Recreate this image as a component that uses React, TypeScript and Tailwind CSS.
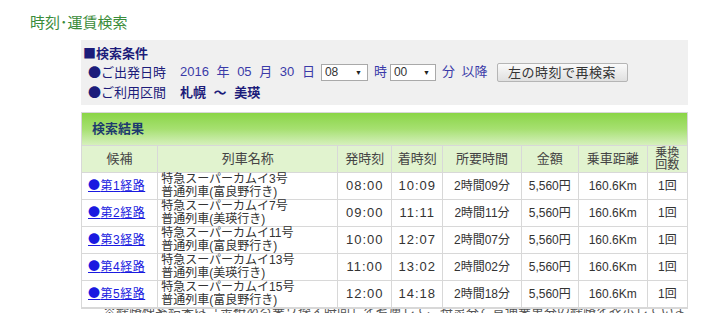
const ROUTES = [
  { no: 1, name: '特急スーパーカムイ3号', sub: '普通列車(富良野行き)', dep: '08:00', arr: '10:09', time: '2時間09分' },
  { no: 2, name: '特急スーパーカムイ7号', sub: '普通列車(美瑛行き)', dep: '09:00', arr: '11:11', time: '2時間11分' },
  { no: 3, name: '特急スーパーカムイ11号', sub: '普通列車(富良野行き)', dep: '10:00', arr: '12:07', time: '2時間07分' },
  { no: 4, name: '特急スーパーカムイ13号', sub: '普通列車(美瑛行き)', dep: '11:00', arr: '13:02', time: '2時間02分' },
  { no: 5, name: '特急スーパーカムイ15号', sub: '普通列車(富良野行き)', dep: '12:00', arr: '14:18', time: '2時間18分' },
]

const CJK = "font-['Noto_Sans_CJK_JP',sans-serif]"

function Select({ value, width }: { value: string; width: string }) {
  return (
    <span
      className={`inline-flex items-center justify-between h-[17px] border border-[#a9a9a9] bg-white pl-[3px] pr-[5px] text-[12px] leading-none text-[#333] ${width}`}
    >
      {value}
      <span className="text-[7px] text-[#222]">▼</span>
    </span>
  )
}

export default function App() {
  return (
    <div className="w-[726px] h-[336px] overflow-hidden bg-white font-['Liberation_Sans','Noto_Sans_CJK_JP',sans-serif]">
      <h1 className="pl-[30px] pt-[14px] text-[15px] leading-[18px] text-[#3a8c3a]">時刻･運賃検索</h1>

      <div className="ml-[81px] w-[607px]">
        {/* search conditions */}
        <div className="mt-[8px] h-[65px] bg-[#f0f0f0] pl-[2px] pt-[4px] text-[13px] text-[#1c1c7a]">
          <div className="h-[17px] leading-[17px] font-bold">
            <span className={CJK}>■</span>検索条件
          </div>
          <div className="flex items-center h-[22px] pl-[5px]">
            <span className="w-[92px]">
              <span className={CJK}>●</span>ご出発日時
            </span>
            <span className="text-[#3a3aa8] [word-spacing:4px]">2016 年 05 月 30 日</span>
            <span className="ml-[6px]">
              <Select value="08" width="w-[47px]" />
            </span>
            <span className="ml-[6px] text-[#3a3aa8]">時</span>
            <span className="ml-[3px]">
              <Select value="00" width="w-[46px]" />
            </span>
            <span className="ml-[6px] text-[#3a3aa8] [word-spacing:3px]">分 以降</span>
            <button className="ml-[9px] h-[19px] w-[131px] border border-[#b5b5b5] rounded-[2px] bg-gradient-to-b from-[#fafafa] to-[#e0e0e0] text-[13px] leading-none text-[#333] tracking-[0.5px]">
              左の時刻で再検索
            </button>
          </div>
          <div className="flex items-center h-[19px] pl-[5px]">
            <span className="w-[92px]">
              <span className={CJK}>●</span>ご利用区間
            </span>
            <span className="font-bold [word-spacing:4px]">札幌 ～ 美瑛</span>
          </div>
        </div>

        {/* results */}
        <div className="mt-[7px] border border-[#d8d8d8]">
          <div className="h-[32px] bg-gradient-to-b from-[#8ad545] via-[#a6e070] to-[#d6f0bc] pl-[10px] text-[13px] leading-[32px] font-bold text-[#1d3a6e]">
            検索結果
          </div>
          <table className="w-full border-collapse text-[13px] text-[#333]">
            <colgroup>
              <col className="w-[76px]" />
              <col className="w-[181px]" />
              <col className="w-[54px]" />
              <col className="w-[51px]" />
              <col className="w-[79px]" />
              <col className="w-[57px]" />
              <col className="w-[69px]" />
              <col className="w-[40px]" />
            </colgroup>
            <thead>
              <tr className="h-[27px] bg-[#e1f3cf] text-[#444]">
                <th className="border border-[#d8d8d8] border-l-0 font-normal">候補</th>
                <th className="border border-[#d8d8d8] font-normal">列車名称</th>
                <th className="border border-[#d8d8d8] font-normal">発時刻</th>
                <th className="border border-[#d8d8d8] font-normal">着時刻</th>
                <th className="border border-[#d8d8d8] font-normal">所要時間</th>
                <th className="border border-[#d8d8d8] font-normal">金額</th>
                <th className="border border-[#d8d8d8] font-normal">乗車距離</th>
                <th className="border border-[#d8d8d8] border-r-0 font-normal text-[12px] leading-[12px]">
                  乗換
                  <br />
                  回数
                </th>
              </tr>
            </thead>
            <tbody>
              {ROUTES.map((r) => (
                <tr key={r.no} className="h-[27px]">
                  <td className="border border-[#d8d8d8] border-l-0 pl-[6px]">
                    <a href="#" className="text-[12px] text-[#1a1ae0] underline tracking-[0.5px]">
                      <span className={CJK}>●</span>第{r.no}経路
                    </a>
                  </td>
                  <td className="border border-[#d8d8d8] pl-[3px] text-[12px] leading-[13px]">
                    {r.name}
                    <br />
                    {r.sub}
                  </td>
                  <td className="border border-[#d8d8d8] text-center tracking-[1px]">{r.dep}</td>
                  <td className="border border-[#d8d8d8] text-center tracking-[1px]">{r.arr}</td>
                  <td className="border border-[#d8d8d8] text-center text-[12px]">{r.time}</td>
                  <td className="border border-[#d8d8d8] text-center text-[12px]">5,560円</td>
                  <td className="border border-[#d8d8d8] text-center text-[12px]">160.6Km</td>
                  <td className="border border-[#d8d8d8] border-r-0 text-center text-[12px]">1回</td>
                </tr>
              ))}
            </tbody>
          </table>
        </div>

        {/* note line, clipped in the capture */}
        <div className="h-[4px] overflow-hidden pl-[22px] text-[13px] leading-[15px] text-[#555]">
          <div className="-mt-[7px]">※経路検索結果は「余裕ある乗り換え時間」を考慮して、特急券と普通乗車券の経路を表示しています。</div>
        </div>
      </div>
    </div>
  )
}
